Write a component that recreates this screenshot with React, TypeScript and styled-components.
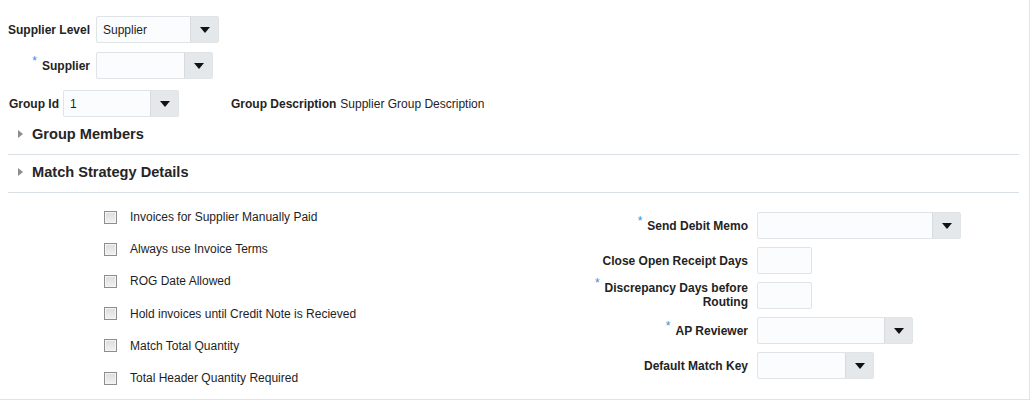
import { createGlobalStyle } from "styled-components";
import styled from "styled-components";

const GlobalStyle = createGlobalStyle`
  html, body {
    margin: 0;
    padding: 0;
    background: #ffffff;
  }
  body {
    font-family: "Liberation Sans", Arial, sans-serif;
    font-size: 12px;
    color: #232323;
  }
`;

const checkOptions = [
  "Invoices for Supplier Manually Paid",
  "Always use Invoice Terms",
  "ROG Date Allowed",
  "Hold invoices until Credit Note is Recieved",
  "Match Total Quantity",
  "Total Header Quantity Required",
];

function Choice({ width, value }: { width: number; value?: string }) {
  return (
    <SelectBox $width={width}>
      <SelectValue>{value}</SelectValue>
      <SelectButton>
        <Arrow />
      </SelectButton>
    </SelectBox>
  );
}

function Required() {
  return <Star>*</Star>;
}

export default function App() {
  return (
    <>
      <GlobalStyle />
      <Page>
        <TopForm>
          <FieldRow>
            <TopLabel>Supplier Level</TopLabel>
            <Choice width={123} value="Supplier" />
          </FieldRow>
          <FieldRow>
            <TopLabel>
              <Required />
              Supplier
            </TopLabel>
            <Choice width={117} />
          </FieldRow>
          <GroupRow>
            <InlineLabel>Group Id</InlineLabel>
            <Choice width={116} value="1" />
            <DescLabel>Group Description</DescLabel>
            <DescValue>Supplier Group Description</DescValue>
          </GroupRow>
        </TopForm>

        <Section>
          <Disclosure />
          <SectionTitle>Group Members</SectionTitle>
        </Section>
        <Section>
          <Disclosure />
          <SectionTitle>Match Strategy Details</SectionTitle>
        </Section>

        <Details>
          <CheckList>
            {checkOptions.map((text) => (
              <CheckRow key={text}>
                <CheckBox />
                <CheckText>{text}</CheckText>
              </CheckRow>
            ))}
          </CheckList>
          <RightForm>
            <FormLabel>
              <Required />
              Send Debit Memo
            </FormLabel>
            <Choice width={204} />

            <FormLabel>Close Open Receipt Days</FormLabel>
            <TextBox />

            <FormLabel $wrap>
              <Required />
              Discrepancy Days before Routing
            </FormLabel>
            <TextBox />

            <FormLabel>
              <Required />
              AP Reviewer
            </FormLabel>
            <Choice width={156} />

            <FormLabel>Default Match Key</FormLabel>
            <Choice width={117} />
          </RightForm>
        </Details>
      </Page>
    </>
  );
}

const Page = styled.main`
  width: 1030px;
  height: 400px;
  box-sizing: border-box;
  border-right: 1px solid #dfe4e8;
  border-bottom: 1px solid #dfe4e8;
  padding: 16px 10px 0 8px;
`;

const TopForm = styled.div`
  display: flex;
  flex-direction: column;
`;

const FieldRow = styled.div`
  display: flex;
  align-items: center;
  gap: 6px;
  margin-bottom: 9px;
`;

const GroupRow = styled.div`
  display: flex;
  align-items: center;
  margin-top: 2px;
  padding-left: 1px;
`;

const TopLabel = styled.label`
  width: 82px;
  text-align: right;
  font-weight: bold;
  white-space: nowrap;
`;

const InlineLabel = styled.label`
  font-weight: bold;
  margin-right: 4px;
`;

const DescLabel = styled.span`
  font-weight: bold;
  margin-left: 52px;
  margin-right: 4px;
`;

const DescValue = styled.span``;

const Star = styled.span`
  color: #3a8ee0;
  font-weight: normal;
  font-size: 12px;
  position: relative;
  top: -5px;
  margin-right: 5px;
`;

const SelectBox = styled.div<{ $width: number }>`
  width: ${(p) => p.$width}px;
  height: 27px;
  box-sizing: border-box;
  display: flex;
  border: 1px solid #dfe4e7;
  border-radius: 2px;
  background: #fbfcfd;
`;

const SelectValue = styled.span`
  flex: 1;
  display: flex;
  align-items: center;
  padding-left: 6px;
  color: #1e1e1e;
`;

const SelectButton = styled.span`
  width: 27px;
  display: flex;
  align-items: center;
  justify-content: center;
  border-left: 1px solid #d5dbdf;
  background: #e4e8eb;
`;

const Arrow = styled.span`
  width: 0;
  height: 0;
  border-left: 5px solid transparent;
  border-right: 5px solid transparent;
  border-top: 6px solid #111;
`;

const TextBox = styled.div`
  width: 55px;
  height: 27px;
  box-sizing: border-box;
  border: 1px solid #dfe4e7;
  border-radius: 2px;
  background: #fbfcfd;
`;

const Section = styled.div`
  display: flex;
  align-items: center;
  height: 20px;
  padding: 7px 0 10px 10px;
  border-bottom: 1px solid #d9e0e5;
`;

const Disclosure = styled.span`
  width: 0;
  height: 0;
  border-top: 4.5px solid transparent;
  border-bottom: 4.5px solid transparent;
  border-left: 5px solid #8d8d8d;
  margin-right: 9px;
`;

const SectionTitle = styled.h3`
  margin: 0;
  font-size: 14.6px;
  font-weight: bold;
  color: #252525;
`;

const Details = styled.div`
  display: flex;
  padding-left: 96px;
`;

const CheckList = styled.div`
  width: 488px;
  padding-top: 8px;
  display: flex;
  flex-direction: column;
`;

const CheckRow = styled.div`
  height: 32.2px;
  display: flex;
  align-items: center;
`;

const CheckBox = styled.span`
  width: 13px;
  height: 13px;
  box-sizing: border-box;
  border: 1px solid #8e8e8e;
  box-shadow: inset 0 0 0 1px #f4f4f4;
  background: linear-gradient(#dcdcdc, #f2f2f2);
  margin-right: 13px;
`;

const CheckText = styled.span`
  color: #1e1e1e;
`;

const RightForm = styled.div`
  padding-top: 19px;
  display: grid;
  grid-template-columns: 156px auto;
  column-gap: 9px;
  row-gap: 8px;
  align-items: center;
  justify-items: start;
  align-content: start;
`;

const FormLabel = styled.label<{ $wrap?: boolean }>`
  justify-self: stretch;
  text-align: right;
  font-weight: bold;
  line-height: 14px;
  white-space: ${(p) => (p.$wrap ? "normal" : "nowrap")};
  margin: ${(p) => (p.$wrap ? "-2px 0 0" : "0")};
`;
